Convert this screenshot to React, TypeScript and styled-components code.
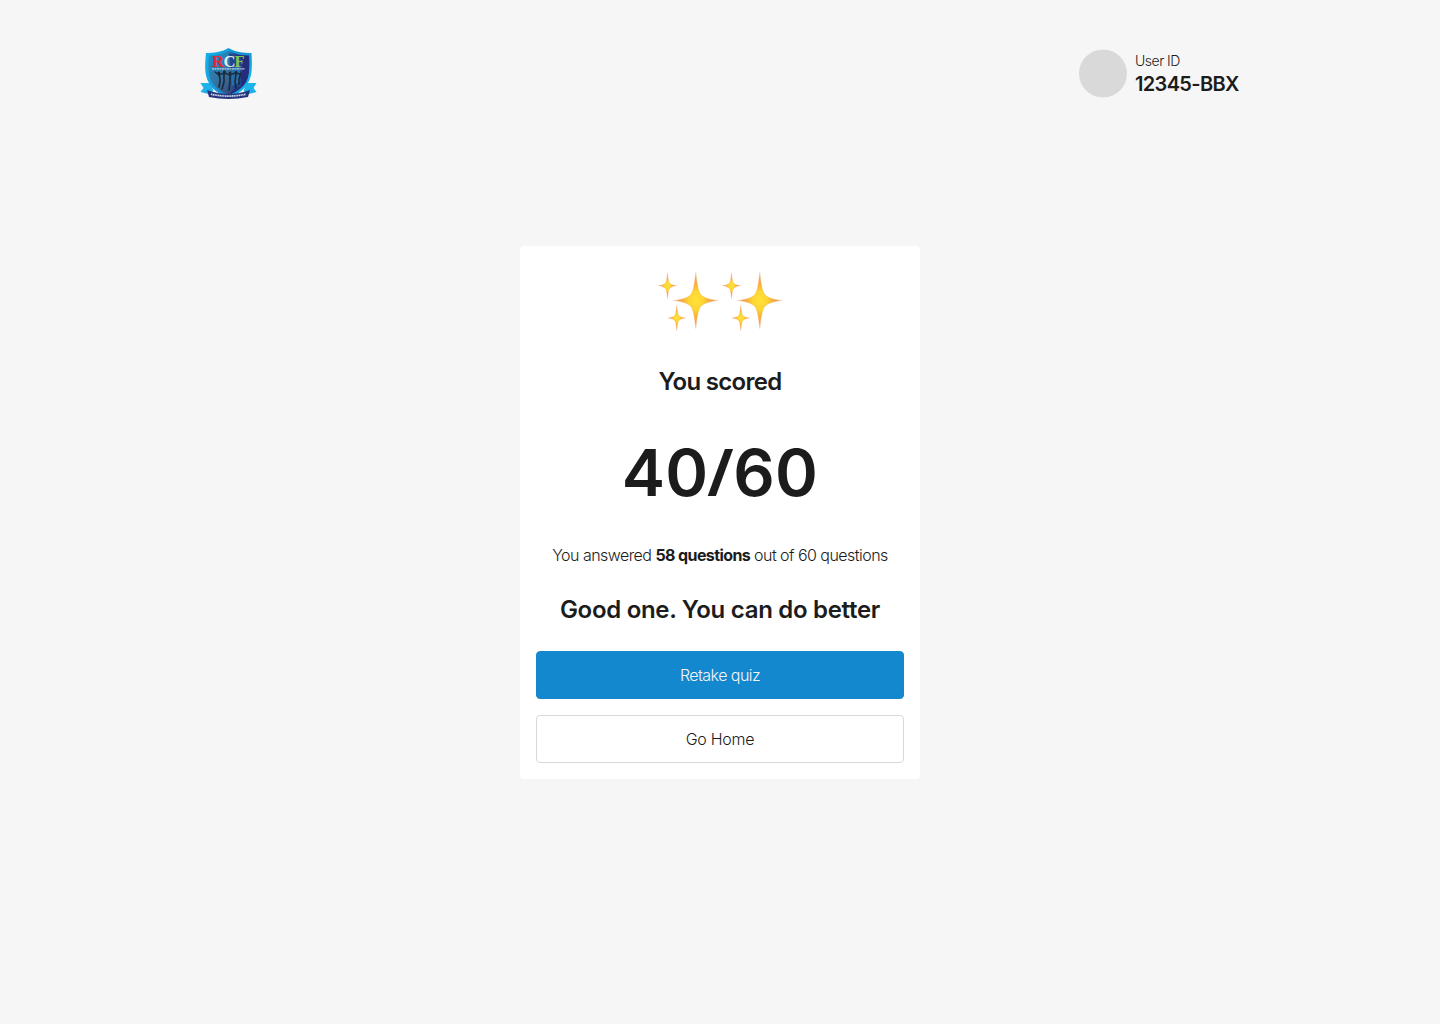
import React from "react";
import styled, { createGlobalStyle } from "styled-components";

const Global = createGlobalStyle`
  *, *::before, *::after { box-sizing: border-box; }
  body {
    margin: 0;
    background: #f6f6f6;
    color: #1c1c1c;
    font-family: Inter, "Liberation Sans", sans-serif;
  }
`;

const Page = styled.div`
  min-height: 1024px;
  display: flex;
  flex-direction: column;
`;

const Header = styled.header`
  display: flex;
  align-items: center;
  justify-content: space-between;
  height: 147px;
  padding: 0 200px;
`;

const User = styled.div`
  display: flex;
  align-items: center;
  gap: 8px;
  width: 161px;
`;

const Avatar = styled.svg`
  width: 48px;
  height: 48px;
  flex: none;
  overflow: visible;
  fill: #d9d9d9;
`;

const UserText = styled.div`
  display: flex;
  flex-direction: column;
  white-space: nowrap;
`;

const Main = styled.main`
  display: flex;
  justify-content: center;
  padding-top: 99px;
`;

const Card = styled.section`
  width: 400px;
  height: 533px;
  padding: 24px 16px 16px;
  border-radius: 4px;
  background: #fff;
  display: flex;
  flex-direction: column;
  align-items: center;
`;

const Line = styled.div<{ $size: number; $height: number; $weight: number; $spacing?: number; $top?: number }>`
  margin-top: ${(p) => p.$top ?? 0}px;
  font-size: ${(p) => p.$size}px;
  line-height: ${(p) => p.$height}px;
  font-weight: ${(p) => p.$weight};
  letter-spacing: ${(p) => p.$spacing ?? 0}px;
  white-space: nowrap;

  strong {
    font-weight: 700;
    letter-spacing: -0.6px;
  }
`;

/* Keeps the slash between the baseline and the top of the digits. */
const Slash = styled.span`
  display: inline-block;
  transform: translateY(-2px) scale(1.13, 0.83);
`;

const Actions = styled.div`
  width: 100%;
  margin-top: auto;
  display: flex;
  flex-direction: column;
  gap: 16px;
`;

const Button = styled.button<{ $primary?: boolean; $spacing: number }>`
  height: 48px;
  padding: 0 0 1px;
  border-radius: 4px;
  border: 1px solid ${(p) => (p.$primary ? "#1488cf" : "#d9d9d9")};
  background: ${(p) => (p.$primary ? "#1488cf" : "#fff")};
  color: ${(p) => (p.$primary ? "#f5f5f5" : "#1c1c1c")};
  font: 300 16px/24px Inter, "Liberation Sans", sans-serif;
  letter-spacing: ${(p) => p.$spacing}px;
`;

/* A four-pointed star with a rounded body and thin, tapering arms. */
function star(cx: number, cy: number, rx: number, ry: number) {
  const points = [
    [0, -1], [0.07, -0.52], [0.13, -0.24], [0.29, -0.17],
    [0.46, -0.08], [0.66, -0.03], [1, 0],
    [0.66, 0.03], [0.46, 0.08], [0.29, 0.17],
    [0.13, 0.24], [0.07, 0.52], [0, 1],
    [-0.07, 0.52], [-0.13, 0.24], [-0.29, 0.17],
    [-0.46, 0.08], [-0.66, 0.03], [-1, 0],
    [-0.66, -0.03], [-0.46, -0.08], [-0.29, -0.17],
    [-0.13, -0.24], [-0.07, -0.52], [0, -1],
  ].map(([x, y]) => `${(cx + x * rx).toFixed(2)} ${(cy + y * ry).toFixed(2)}`);
  return `M${points[0]} C${points.slice(1).join(" ")}Z`;
}

const SPARKLES = [
  star(39.8, 30.5, 22, 28),
  star(11.5, 15.7, 8.8, 12.8),
  star(20.8, 48, 8.8, 12.5),
];

function Sparkles() {
  return (
    <svg width="128" height="64" viewBox="0 0 128 64" aria-hidden="true">
      <defs>
        <radialGradient id="spark">
          <stop offset="0" stopColor="#ffe13a" />
          <stop offset="0.35" stopColor="#fdd532" />
          <stop offset="0.55" stopColor="#f8b438" />
          <stop offset="0.82" stopColor="#f2984c" stopOpacity="0.9" />
          <stop offset="1" stopColor="#f2a070" stopOpacity="0.3" />
        </radialGradient>
      </defs>
      {[0, 64].map((x) => (
        <g key={x} transform={`translate(${x} 0)`}>
          {SPARKLES.map((d) => (
            <path key={d} d={d} fill="url(#spark)" stroke="#f39a4a" strokeWidth="0.7" strokeOpacity="0.4" strokeLinejoin="round" />
          ))}
        </g>
      ))}
    </svg>
  );
}

function Logo() {
  return (
    <svg width="57" height="52" viewBox="0 0 57 52" role="img" aria-label="RCF">
      <defs>
        <linearGradient id="rim" x1="0" y1="0" x2="1" y2="0.5">
          <stop offset="0" stopColor="#16b4ec" />
          <stop offset="0.7" stopColor="#138fd0" />
          <stop offset="1" stopColor="#12b5e9" />
        </linearGradient>
        <linearGradient id="field" x1="0" y1="0" x2="1" y2="1">
          <stop offset="0" stopColor="#1596d4" />
          <stop offset="0.5" stopColor="#3a6d98" />
          <stop offset="1" stopColor="#252569" />
        </linearGradient>
      </defs>
      <path d="M0.5 35h10l3 8-5 3-8-2 3-4zM56.5 35h-10l-3 8 5 3 8-2-3-4z" fill="#1fb2e8" />
      <path d="M28.5 0C22 4 14 5 6 5C5 15 4 27 9 35C13 42 20 47 28.5 50C37 47 44 42 48 35C53 27 52 15 51.5 5C43 5 35 4 28.5 0Z" fill="url(#rim)" />
      <path d="M28.5 3C23 6 16 7.500 9 7.500C8 18 8 28 12 34C16 41 22 44 28.500 47C35 44 42 41 46 34C50 27 49.500 17 49 7.500C41 7.500 34 6 28.500 3Z" fill="url(#field)" />
      <path d="M29 3Q38 8 49 7.500Q50 27 46 34Q41 42 29 47Q42 34 42 20Q42 10 29 3Z" fill="#252c7c" />
      <path d="M29 5l12 4v29l-8 4z" fill="#20468f" />
      <path d="M31 21l9-4v17l-8 4z" fill="#2670ae" />
      <g fill="none" stroke="#1a2c3c" strokeWidth="1.7" strokeLinecap="round">
        <path d="M18 25l2 5v4l-1 5M24 24v10l-2 7M30 25v9l-1 8M36 25l-1 9 1 6M41 25l-2 6v5" />
        <path d="M15 24l4 3 5-2 6 2 5-2 5 1" strokeWidth="1.4" />
      </g>
      <g fill="#1a2c3c">
        <circle cx="19" cy="25" r="1.400" /><circle cx="24.500" cy="24" r="1.400" />
        <circle cx="30" cy="25" r="1.400" /><circle cx="36" cy="24.500" r="1.400" />
      </g>
      <g fontFamily="Liberation Serif, serif" fontSize="16.500" fontWeight="700">
        <text x="12" y="19" fill="#e22936">R</text>
        <text x="23.500" y="19" fill="#e4eef2">C</text>
        <text x="34.500" y="19" fill="#83c64a">F</text>
      </g>
      <path d="M12 20.800H45" stroke="#e1edf4" strokeWidth="1.300" strokeDasharray="2 0.500" opacity="0.75" />
      <path d="M7 42Q28.500 50 50 42L48 49Q28.500 53 9 49Z" fill="#26347f" />
      <path d="M11 46.200Q28.500 50 46 46.200" fill="none" stroke="#dcecf2" strokeWidth="1.700" strokeDasharray="1.300 0.450" opacity="0.9" />
    </svg>
  );
}

export default function App() {
  return (
    <>
      <Global />
      <Page>
        <Header>
          <Logo />
          <User>
            <Avatar viewBox="0 0 48 48">
              <circle cx="24" cy="23.5" r="24" />
            </Avatar>
            <UserText>
              <Line $size={14} $height={20} $weight={300} $spacing={-0.5}>User ID</Line>
              <Line $size={20} $height={26} $weight={600} $spacing={-0.65}>12345-BBX</Line>
            </UserText>
          </User>
        </Header>
        <Main>
          <Card>
            <Sparkles />
            <Line $size={24} $height={32} $weight={600} $top={32} $spacing={-0.7}>You scored</Line>
            <Line $size={65} $height={86} $weight={600} $top={32} $spacing={0.2}>
              40<Slash>/</Slash>60
            </Line>
            <Line $size={16} $height={22} $weight={300} $top={28} $spacing={-0.54}>
              You answered <strong>58 questions</strong> out of 60 questions
            </Line>
            <Line $size={24} $height={32} $weight={600} $top={28} $spacing={-0.3}>Good one. You can do better</Line>
            <Actions>
              <Button $primary $spacing={-0.55}>Retake quiz</Button>
              <Button $spacing={-0.28}>Go Home</Button>
            </Actions>
          </Card>
        </Main>
      </Page>
    </>
  );
}
